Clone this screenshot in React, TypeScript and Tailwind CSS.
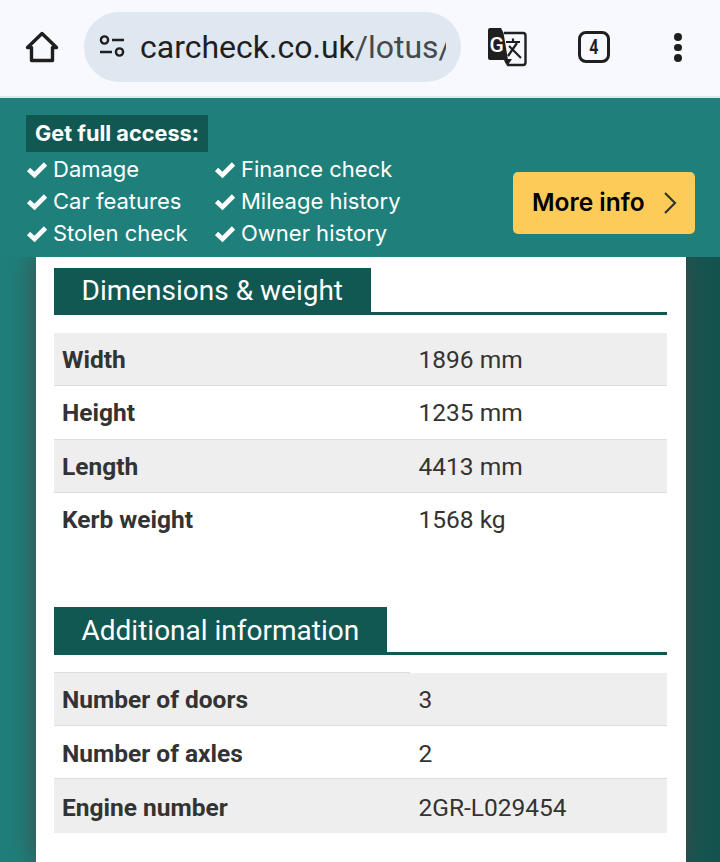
const banner = ["Damage", "Finance check", "Car features", "Mileage history", "Stolen check", "Owner history"];

function Check() {
  return (
    <svg width="22" height="22" viewBox="0 0 22 22" className="shrink-0">
      <path d="M2.5 11.5 L8.5 17 L19.5 6" fill="none" stroke="#fff" strokeWidth="4.6" strokeLinejoin="miter" />
    </svg>
  );
}

function Row({ k, v, shade, border = true, tight = false }: { k: string; v: string; shade: boolean; border?: boolean; tight?: boolean }) {
  return (
    <div className={`flex h-[53.4px] items-center ${border ? "border-b border-[#dddddd]" : ""} ${shade ? "bg-[#eeeeee]" : "bg-white"}`}>
      <div className={`w-[356px] pl-[8px] text-[24.5px] font-bold text-[#333333] ${tight ? "pt-[2px]" : "pt-[4px]"}`}>{k}</div>
      <div className={`flex-1 pl-[8.5px] text-[24.5px] text-[#333333] ${tight ? "pt-[2px]" : "pt-[4px]"}`}>{v}</div>
    </div>
  );
}

function Heading({ t, tall = false }: { t: string; tall?: boolean }) {
  return (
    <div className={`flex items-end ${tall ? "h-[48px]" : "h-[47px]"}`}>
      <div className={`flex h-full items-center bg-[#115752] pl-[27.5px] pr-[27.5px] text-[28px] text-white ${tall ? "" : "pb-[2px]"}`}>{t}</div>
      <div className="h-[3px] flex-1 bg-[#115752]"></div>
    </div>
  );
}

export default function App() {
  return (
    <div className="relative h-[862px] w-[720px] overflow-hidden font-['Roboto',sans-serif]">
      <div className="flex h-[98px] items-center border-b-2 border-[#e0e5ec] bg-[#f8f9ff] pb-[2px]">
        <div className="flex w-[84px] justify-center">
          <svg width="36" height="36" viewBox="0 0 36 36" fill="none" stroke="#1f1f1f" strokeWidth="3.4" strokeLinejoin="round" strokeLinecap="round">
            <path d="M3.5 18.5 L18 4.5 L32.5 18.5 H28.5 V31.5 H7.5 V18.5 Z" />
          </svg>
        </div>
        <div className="flex h-[70px] w-[377px] items-center overflow-hidden rounded-full bg-[#dfe7f0] pl-[15px]">
          <svg width="26" height="24" viewBox="0 0 26 24" fill="none" stroke="#1f1f1f" strokeWidth="2.4" className="shrink-0">
            <circle cx="5.5" cy="5" r="3.6" />
            <path d="M13 5 H25" />
            <path d="M1 17 H13" />
            <circle cx="20.5" cy="17" r="3.6" />
          </svg>
          <div className="ml-[15px] w-[306px] overflow-hidden whitespace-nowrap text-[32px] text-[#1f1f1f]">carcheck.co.uk<span className="text-[#46494d]">/lotus/</span></div>
        </div>
        <div className="flex flex-1 items-center">
          <svg width="40" height="40" viewBox="0 0 40 40" className="ml-[26px] shrink-0">
            <path d="M17 6 H36 Q38.5 6 38.5 8.5 V35.5 Q38.5 38 36 38 H21 L18 33" fill="none" stroke="#1f1f1f" strokeWidth="2.4" />
            <path d="M1 3 Q1 1 3 1 H14 L16.5 6 L21 33 H3 Q1 33 1 31 Z" fill="#1f1f1f" />
            <path d="M18 32 H25 L21 38 Z" fill="#1f1f1f" />
            <text x="2.5" y="25" fontFamily="Roboto" fontWeight="500" fontSize="21" fill="#fff">G</text>
            <path d="M19 15 H33 M26 11.5 V15 M21 29 L30 16 M22 19 L34 31" stroke="#1f1f1f" strokeWidth="2.2" fill="none" />
          </svg>
          <div className="ml-[51px] flex h-[32px] w-[32px] items-center justify-center rounded-[8px] border-[3px] border-[#1f1f1f] text-[20px] font-bold text-[#1f1f1f]">
            <span className="inline-block scale-x-[0.8]">4</span>
          </div>
          <div className="ml-[64px] flex flex-col gap-[3px]">
            <div className="h-[8px] w-[8px] rounded-full bg-[#1f1f1f]"></div>
            <div className="h-[7px] w-[8px] rounded-full bg-[#1f1f1f]"></div>
            <div className="h-[8px] w-[8px] rounded-full bg-[#1f1f1f]"></div>
          </div>
        </div>
      </div>

      <div className="relative z-10 flex h-[159px] items-start bg-[#1f7f7a] pl-[26px] pr-[25px] pt-[17px]">
        <div className="w-[487px] font-['Inter',sans-serif] text-white">
          <div className="flex h-[37px] w-[182px] items-center justify-center bg-[#115752] pb-[1px] text-[21.7px] font-bold">Get full access:</div>
          <div className="grid grid-cols-[188px_1fr] pt-[1px]">
            {banner.map((t) => (
              <div key={t} className="flex h-[32px] items-center gap-[5px] whitespace-nowrap text-[22px] font-normal">
                <Check />
                <span>{t}</span>
              </div>
            ))}
          </div>
        </div>
        <div className="mt-[57px] flex h-[62px] w-[182px] items-center justify-between rounded-[5px] bg-[#fdcb58] pl-[19px] pr-[18px] font-['Inter',sans-serif] text-[24.5px] font-semibold text-black">
          <span className="pb-[2px]">More info</span>
          <svg width="14" height="24" viewBox="0 0 14 24" fill="none" stroke="#333" strokeWidth="2.2"><path d="M2 2 L12 12 L2 22" /></svg>
        </div>
      </div>

      <div className="h-[605px] bg-gradient-to-r from-[#1f7f7a] to-[#14544f] pl-[36px]">
        <div className="h-full w-[649.5px] bg-white pl-[18px] pr-[18.5px] pt-[11px] shadow-[0_0_24px_rgba(70,70,70,0.95)]">
          <Heading t="Dimensions & weight" />
          <div className="mt-[18px]">
            <Row k="Width" v="1896 mm" shade tight />
            <Row k="Height" v="1235 mm" shade={false} tight />
            <Row k="Length" v="4413 mm" shade tight />
            <Row k="Kerb weight" v="1568 kg" shade={false} border={false} tight />
          </div>
          <div className="mt-[60px]">
            <Heading t="Additional information" tall />
          </div>
          <div className="mt-[17px]">
            <div className="h-[1px] w-[356px] bg-[#dddddd]"></div>
            <Row k="Number of doors" v="3" shade />
            <Row k="Number of axles" v="2" shade={false} />
            <Row k="Engine number" v="2GR-L029454" shade border={false} />
          </div>
        </div>
      </div>
    </div>
  );
}
